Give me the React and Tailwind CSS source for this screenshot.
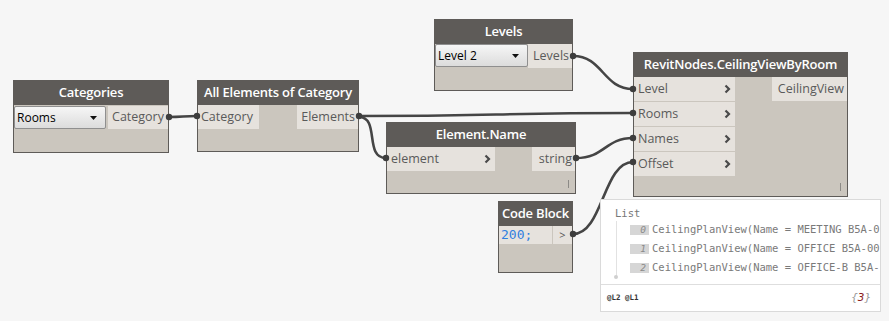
import React from 'react';

const HEAD = 'bg-[#5e5b58]';
const BODY = 'bg-[#cbc6be]';
const PORT = 'bg-[#e6e2dd]';

const Chevron = () => (
  <svg width="7" height="10" viewBox="0 0 7 10" className="shrink-0">
    <path d="M1.5 1.5 L5 5 L1.5 8.5" fill="none" stroke="#4a4a4a" strokeWidth="2.2" />
  </svg>
);

const Dropdown = ({ value, width }) => (
  <div
    className="flex items-center justify-between h-[23px] rounded-[2px] border border-[#8f8f8f] bg-gradient-to-b from-[#f6f6f6] to-[#dcdcdc] pl-[2px] pr-[8px] text-[12px] text-black"
    style={{ width }}
  >
    <span>{value}</span>
    <svg width="7" height="4" viewBox="0 0 7 4">
      <path d="M0 0 L7 0 L3.5 4 Z" fill="#111" />
    </svg>
  </div>
);

const Header = ({ title, h = 'h-[24px]' }) => (
  <div className={`${HEAD} ${h} flex items-center justify-center text-white text-[13px] font-semibold tracking-[-0.2px]`}>
    {title}
  </div>
);

const Resize = () => <div className="absolute right-[6px] bottom-[5px] w-px h-[8px] bg-[#8c8a86]"></div>;

export default function App() {
  return (
    <div
      className="relative w-[889px] h-[321px] bg-[#f6f6f6] overflow-hidden"
      style={{ fontFamily: '"Open Sans", "Noto Sans", sans-serif' }}
    >
      {/* Categories */}
      <div className={`absolute left-[13px] top-[80px] w-[156px] h-[73px] border border-[#5e5b58] ${BODY}`}>
        <Header title="Categories" />
        <div className="flex justify-between mt-px">
          <Dropdown value="Rooms" width={92} />
          <div className={`${PORT} w-[60px] h-[23px] flex items-center justify-end pr-[4px] text-[12.5px] text-[#5a5a5a]`}>Category</div>
        </div>
      </div>

      {/* All Elements of Category */}
      <div className={`absolute left-[197px] top-[80px] w-[162px] h-[72px] border border-[#5e5b58] ${BODY}`}>
        <Header title="All Elements of Category" />
        <div className="flex justify-between">
          <div className={`${PORT} w-[61px] h-[24px] flex items-center pl-[3px] text-[12.5px] text-[#5a5a5a]`}>Category</div>
          <div className={`${PORT} w-[61px] h-[24px] flex items-center justify-end pr-[3px] text-[12.5px] text-[#5a5a5a]`}>Elements</div>
        </div>
      </div>

      {/* Levels */}
      <div className={`absolute left-[434px] top-[19px] w-[139px] h-[72px] border border-[#5e5b58] ${BODY}`}>
        <Header title="Levels" />
        <div className="flex justify-between">
          <Dropdown value="Level 2" width={93} />
          <div className={`${PORT} w-[44px] h-[24px] flex items-center justify-end pr-[3px] text-[12.5px] text-[#5a5a5a]`}>Levels</div>
        </div>
      </div>

      {/* Element.Name */}
      <div className={`absolute left-[386px] top-[122px] w-[190px] h-[72px] border border-[#5e5b58] ${BODY}`}>
        <Header title="Element.Name" />
        <div className="flex justify-between">
          <div className={`${PORT} w-[108px] h-[24px] flex items-center justify-between pl-[4px] pr-[4px] text-[12.5px] text-[#5a5a5a]`}>
            <span>element</span>
            <Chevron />
          </div>
          <div className={`${PORT} w-[43px] h-[24px] flex items-center justify-end pr-[3px] text-[12.5px] text-[#5a5a5a]`}>string</div>
        </div>
        <Resize />
      </div>

      {/* RevitNodes.CeilingViewByRoom */}
      <div className={`absolute left-[633px] top-[52px] w-[215px] h-[145px] border border-[#5e5b58] ${BODY}`}>
        <Header title="RevitNodes.CeilingViewByRoom" />
        <div className="flex justify-between">
          <div className="flex flex-col gap-[1px] w-[101px]">
            {['Level', 'Rooms', 'Names', 'Offset'].map((p) => (
              <div key={p} className={`${PORT} h-[24px] flex items-center justify-between pl-[4px] pr-[4px] text-[12.5px] text-[#5a5a5a]`}>
                <span>{p}</span>
                <Chevron />
              </div>
            ))}
          </div>
          <div className={`${PORT} w-[75px] h-[24px] flex items-center justify-end pr-[3px] text-[12.5px] text-[#5a5a5a]`}>CeilingView</div>
        </div>
        <Resize />
      </div>

      {/* Code Block */}
      <div className={`absolute left-[498px] top-[201px] w-[75px] h-[72px] border border-[#5e5b58] ${BODY}`}>
        <Header title="Code Block" />
        <div className="flex gap-px">
          <div
            className={`${PORT} flex-1 h-[18px] flex items-center pl-[2px] text-[13px] text-[#2f7fe0]`}
            style={{ fontFamily: '"DejaVu Sans Mono", monospace' }}
          >
            200;
          </div>
          <div className={`${PORT} w-[19px] h-[18px] flex items-center justify-center text-[11px] text-[#555]`}>&gt;</div>
        </div>
      </div>

      {/* Wires */}
      <svg className="absolute inset-0" width="889" height="321">
        <g fill="none" stroke="#454545" strokeWidth="2.6" strokeLinecap="round">
          <path d="M169 117 C 183 117, 183 116, 197 116" />
          <path d="M573 56 C 603 56, 603 89, 633 89" />
          <path d="M359 116 C 496 116, 496 113, 633 113" />
          <path d="M359 117 C 380 117, 364 158, 386 158" />
          <path d="M576 158 C 605 158, 605 138, 633 138" />
          <path d="M573 234 C 603 234, 603 162, 633 162" />
        </g>
        <g fill="#3d3d3d">
          <circle cx="169" cy="117" r="3.2" />
          <circle cx="197" cy="116" r="3.2" />
          <circle cx="573" cy="56" r="3.2" />
          <circle cx="633" cy="89" r="3.2" />
          <circle cx="359" cy="116" r="3.2" />
          <circle cx="633" cy="113" r="3.2" />
          <circle cx="386" cy="158" r="3.2" />
          <circle cx="576" cy="158" r="3.2" />
          <circle cx="633" cy="138" r="3.2" />
          <circle cx="573" cy="234" r="3.2" />
          <circle cx="633" cy="162" r="3.2" />
        </g>
      </svg>

      {/* Preview bubble */}
      <div
        className="absolute left-[600px] top-[199px] w-[281px] h-[113px] bg-white border border-[#dadada] flex flex-col"
        style={{ fontFamily: '"DejaVu Sans Mono", monospace' }}
      >
        <div className="relative flex-1 overflow-hidden">
          <div className="absolute left-[14px] top-[6px] text-[10.5px] text-[#777]">List</div>
          <div className="absolute left-[15px] top-[21px] w-px h-[55px] bg-[#e2e2e2]"></div>
          <div className="absolute left-[13px] top-[75px] w-[4px] h-[4px] rounded-full bg-[#cfcfcf]"></div>
          <div className="absolute left-[29px] top-[25px] flex flex-col gap-[9px]">
            {['MEETING B5A-0', 'OFFICE B5A-00', 'OFFICE-B B5A-'].map((n, i) => (
              <div key={i} className="flex items-center gap-[3px] h-[10px] whitespace-nowrap">
                <div className="w-[19px] h-[10px] bg-[#d6d6d6] flex items-center justify-end pr-[3px] text-[9.5px] italic text-[#8a8a8a]">{i}</div>
                <div className="text-[10.5px] text-[#7a7a7a]">CeilingPlanView(Name = {n}</div>
              </div>
            ))}
          </div>
        </div>
        <div className="h-[27px] border-t border-[#dedede] flex items-center justify-between pl-[6px] pr-[9px]">
          <span className="text-[7.5px] font-bold text-[#333]">@L2 @L1</span>
          <span className="text-[11px] italic text-[#999]">
            {'{'}<span className="text-[#8b1d1d]">3</span>{'}'}
          </span>
        </div>
      </div>
    </div>
  );
}
